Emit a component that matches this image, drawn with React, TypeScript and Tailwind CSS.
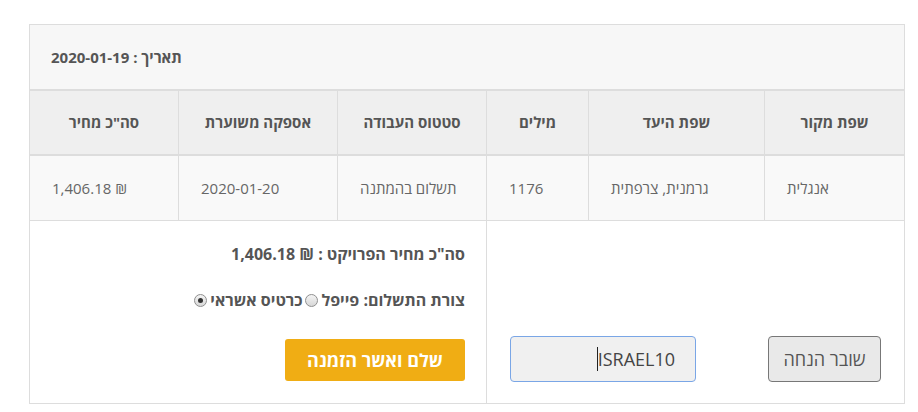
import React from 'react';

const columns = ['שפת מקור', 'שפת היעד', 'מילים', 'סטטוס העבודה', 'אספקה משוערת', 'סה"כ מחיר'];
const row = ['אנגלית', 'גרמנית, צרפתית', '1176', 'תשלום בהמתנה', '2020-01-20', '₪ 1,406.18'];

const gridCols = 'grid grid-cols-[140px_176px_102px_149px_159px_1fr]';

function Radio({ checked }: { checked?: boolean }) {
  return (
    <span className="mx-[3px] inline-flex h-[13px] w-[13px] items-center justify-center rounded-full border border-[#8f8f8f] bg-gradient-to-b from-[#f4f4f4] to-[#d8d8d8] align-middle">
      {checked && <span className="h-[5px] w-[5px] rounded-full bg-[#333]" />}
    </span>
  );
}

export default function App() {
  return (
    <div className="min-h-[412px] bg-white pl-[29px] pt-6" style={{ fontFamily: '"Open Sans", "DejaVu Sans", sans-serif' }}>
      <div dir="rtl" className="w-[876px] border border-[#dddddd] text-[#555]">
        <div className="flex h-[66px] items-center justify-end border-b-2 border-[#dddddd] bg-[#f7f7f7] pl-[21px] text-[15px] font-bold">
          תאריך : 2020-01-19
        </div>

        <div className={`${gridCols} h-[65px] border-b-2 border-[#dddddd] bg-[#efefef]`}>
          {columns.map((c, i) => (
            <div
              key={c}
              className={`flex items-center justify-center text-[15px] font-bold ${i < columns.length - 1 ? 'border-l border-[#dddddd]' : ''}`}
            >
              {c}
            </div>
          ))}
        </div>

        <div className={`${gridCols} h-[65px] border-b border-[#dddddd] bg-[#f9f9f9]`}>
          {row.map((c, i) => (
            <div
              key={i}
              className={`flex items-center justify-end pl-[22px] text-[15px] text-[#666] ${i < row.length - 1 ? 'border-l border-[#dddddd]' : ''}`}
            >
              {c}
            </div>
          ))}
        </div>

        <div className="grid h-[182px] grid-cols-[418px_1fr]">
          <div className="flex items-end justify-between border-l border-[#dddddd] px-[23px] pb-[21px]">
            <button className="h-[46px] w-[113px] rounded-[4px] border border-[#777] bg-[#e9e9e9] text-[18px] text-[#555]">
              שובר הנחה
            </button>
            <div className="flex h-[46px] w-[186px] items-center rounded-[4px] border border-[#7aa6e6] bg-[#f0f0f0] pr-[20px] text-[18px] text-[#444]">
              <span>ISRAEL10</span>
              <span className="h-[24px] w-px bg-[#222]" />
            </div>
          </div>

          <div className="flex flex-col items-start pr-[21px] pt-[23px] text-[16px] font-bold">
            <div className="leading-5">סה"כ מחיר הפרויקט : ₪ 1,406.18</div>
            <div className="mt-[26px] flex items-center leading-5">
              <span>צורת התשלום: פייפל</span>
              <Radio />
              <span>כרטיס אשראי</span>
              <Radio checked />
            </div>
            <button className="mt-[29px] h-[42px] w-[180px] rounded-[3px] bg-[#f0ad14] text-[18px] font-bold text-white">
              שלם ואשר הזמנה
            </button>
          </div>
        </div>
      </div>
    </div>
  );
}
